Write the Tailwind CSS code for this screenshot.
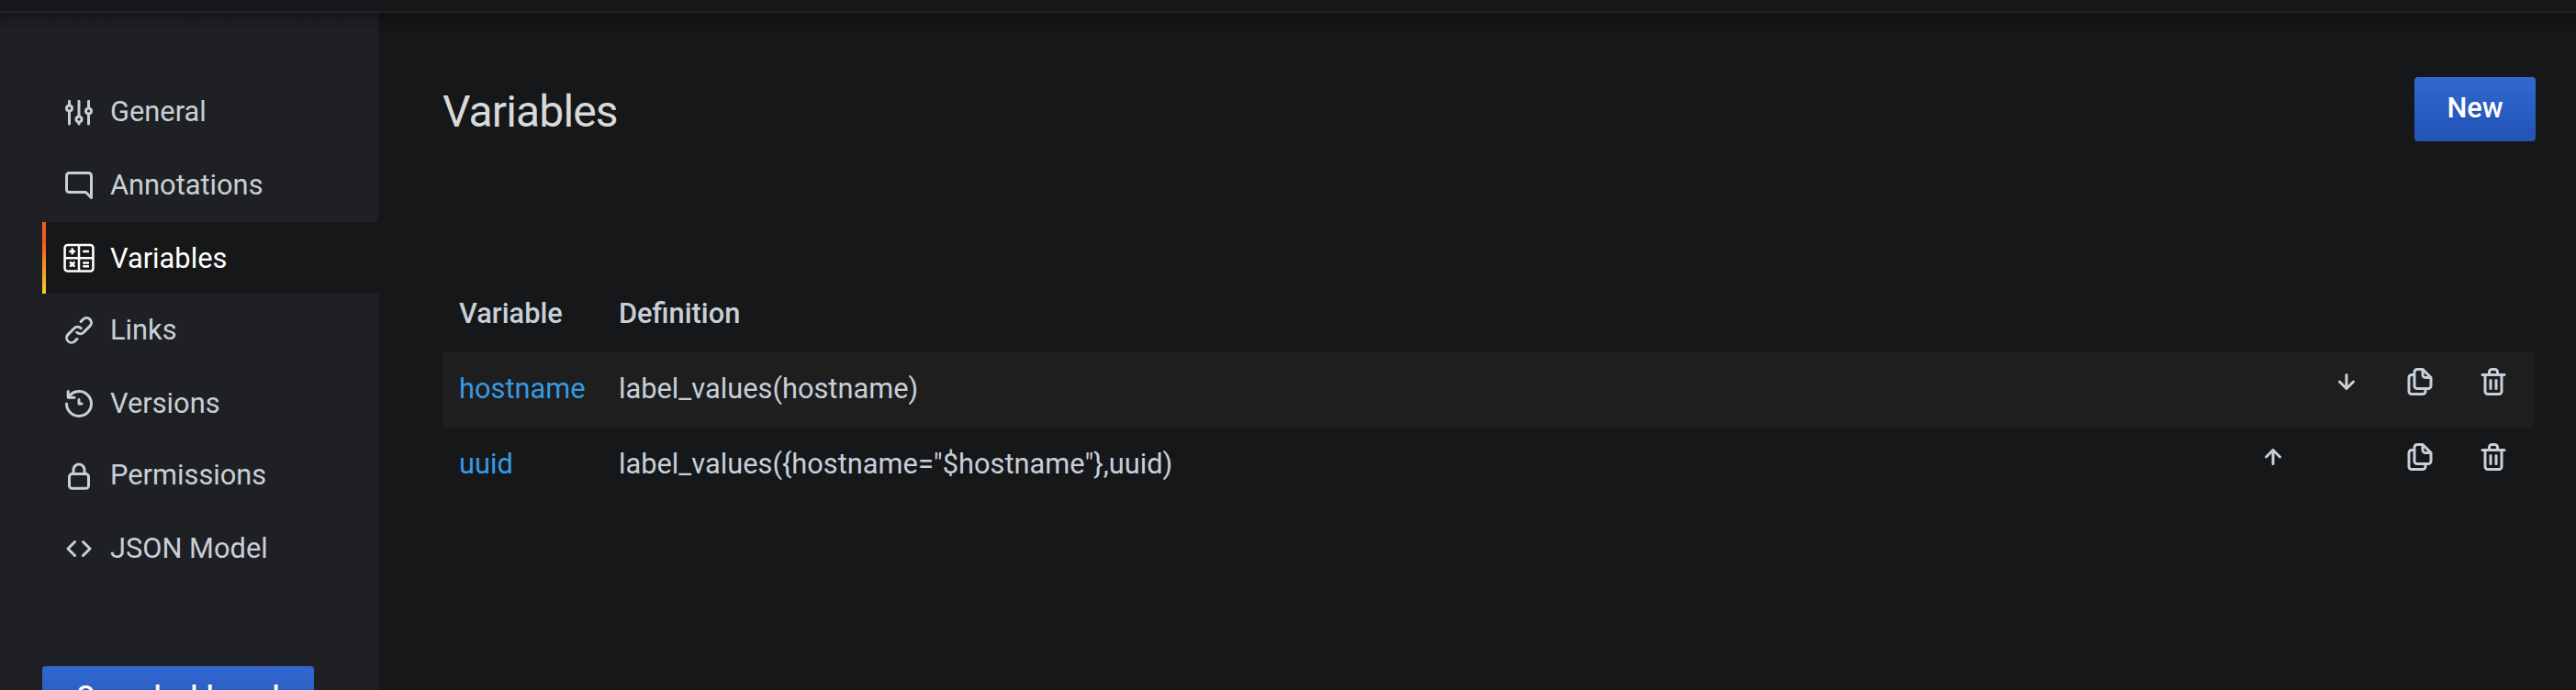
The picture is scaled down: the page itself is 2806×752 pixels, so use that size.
<!DOCTYPE html>
<html lang="en">
<head>
<meta charset="utf-8">
<title>Variables</title>
<script src="https://cdn.jsdelivr.net/npm/@tailwindcss/browser@4"></script>
</head>
<body class="flex h-[752px] w-[2806px] flex-col overflow-hidden bg-[#161719] font-['Roboto',sans-serif] text-[30.8px] leading-[47px] text-[#c7d0d9]">
  <svg class="hidden">
    <symbol id="copy" viewBox="0 0 24 24"><path d="M21,8.94a1.31,1.31,0,0,0-.06-.27l0-.09a1.07,1.07,0,0,0-.19-.28h0l-6-6h0a1.07,1.07,0,0,0-.28-.19.32.32,0,0,0-.09,0A.88.88,0,0,0,14.05,2H10A3,3,0,0,0,7,5V6H6A3,3,0,0,0,3,9V19a3,3,0,0,0,3,3h8a3,3,0,0,0,3-3V18h1a3,3,0,0,0,3-3V9S21,9,21,8.94ZM15,5.41,17.59,8H16a1,1,0,0,1-1-1ZM15,19a1,1,0,0,1-1,1H6a1,1,0,0,1-1-1V9A1,1,0,0,1,6,8H7v7a3,3,0,0,0,3,3h5Zm4-4a1,1,0,0,1-1,1H10a1,1,0,0,1-1-1V5a1,1,0,0,1,1-1h3V7a3,3,0,0,0,3,3h3Z"/></symbol>
    <symbol id="trash" viewBox="0 0 24 24"><path d="M10,18a1,1,0,0,0,1-1V11a1,1,0,0,0-2,0v6A1,1,0,0,0,10,18ZM20,6H16V5a3,3,0,0,0-3-3H11A3,3,0,0,0,8,5V6H4A1,1,0,0,0,4,8H5V19a3,3,0,0,0,3,3h8a3,3,0,0,0,3-3V8h1a1,1,0,0,0,0-2ZM10,5a1,1,0,0,1,1-1h2a1,1,0,0,1,1,1V6H10Zm7,14a1,1,0,0,1-1,1H8a1,1,0,0,1-1-1V8H17Zm-3-1a1,1,0,0,0,1-1V11a1,1,0,0,0-2,0v6A1,1,0,0,0,14,18Z"/></symbol>
    <symbol id="arrow" viewBox="0 0 24 24"><path d="M17.71,11.29a1,1,0,0,0-1.42,0L13,14.59V7a1,1,0,0,0-2,0v7.59l-3.29-3.3a1,1,0,0,0-1.42,1.42l5,5a1,1,0,0,0,.33.21.94.94,0,0,0,.76,0,1,1,0,0,0,.33-.21l5-5A1,1,0,0,0,17.71,11.29Z"/></symbol>
  </svg>

  <header class="h-[14px] shrink-0 border-b-2 border-[#202226]"></header>
  <div class="relative flex min-h-0 flex-1">
    <div class="absolute inset-x-0 top-0 h-5 bg-linear-to-b from-black/25 to-transparent"></div>
    <aside class="w-[412px] shrink-0 bg-[#1f2024] pl-[46px] pt-[69.33px]">
      <nav class="flex flex-col gap-[1.33px]">
        <a class="flex h-[78px] items-center gap-4 pl-[22px]">
          <svg class="size-9" viewBox="0 0 24 24" fill="currentColor"><path transform="translate(0 .35)" d="M20,8.18V3.8a1,1,0,0,0-2,0V8.18a3,3,0,0,0,0,5.64V20.3a1,1,0,0,0,2,0V13.82a3,3,0,0,0,0-5.64ZM19,12a1,1,0,1,1,1-1A1,1,0,0,1,19,12Zm-6,2.18V3.8a1,1,0,0,0-2,0V14.18a3,3,0,0,0,0,5.64V20.3a1,1,0,0,0,2,0V19.82a3,3,0,0,0,0-5.64ZM12,18a1,1,0,1,1,1-1A1,1,0,0,1,12,18ZM6,6.18V3.8A1,1,0,0,0,4,3.8V6.18a3,3,0,0,0,0,5.64V20.3a1,1,0,0,0,2,0V11.82A3,3,0,0,0,6,6.18ZM5,10A1,1,0,1,1,6,9,1,1,0,0,1,5,10Z"/></svg>
          <span class="pb-px">General</span>
        </a>
        <a class="flex h-[78px] items-center gap-4 pl-[22px]">
          <svg class="size-9" viewBox="0 0 24 24" fill="currentColor"><path d="M19,2H5A3,3,0,0,0,2,5V15a3,3,0,0,0,3,3H16.59l3.7,3.71A1,1,0,0,0,21,22a.84.84,0,0,0,.38-.08A1,1,0,0,0,22,21V5A3,3,0,0,0,19,2Zm1,16.59-2.29-2.3A1,1,0,0,0,17,16H5a1,1,0,0,1-1-1V5A1,1,0,0,1,5,4H19a1,1,0,0,1,1,1Z"/></svg>
          <span class="pb-px">Annotations</span>
        </a>
        <a class="flex h-[78px] items-center bg-[#161719] text-white">
          <span class="h-full w-1 bg-linear-to-b from-[#f05a28] from-30% to-[#fbca2a]"></span>
          <svg class="ml-[18px] mr-4 size-9" viewBox="0 0 24 24" fill="none" stroke="currentColor" stroke-width="1.7"><rect x="1.7" y="2.6" width="20.6" height="19" rx="2"/><path d="M12 2.6v19M1.7 12.1h20.6"/><path d="M4.9 7.3h4.5M7.15 5.05v4.5M14.8 7.3h4.5M5.4 14.95l3.5 3.5M8.9 14.95l-3.5 3.5M14.8 15.6h4.5M14.8 18.2h4.5"/></svg>
          <span class="pt-px">Variables</span>
        </a>
        <a class="flex h-[78px] items-center gap-4 pl-[22px]">
          <svg class="size-9" viewBox="0 0 24 24" fill="currentColor"><path d="M10,17.55,8.23,19.27a2.47,2.47,0,0,1-3.5-3.5l4.54-4.55a2.46,2.46,0,0,1,3.39-.09l.12.1a1,1,0,0,0,1.4-1.43A2.75,2.75,0,0,0,14,9.59a4.46,4.46,0,0,0-6.09.22L3.31,14.36a4.48,4.48,0,0,0,6.33,6.33L11.37,19A1,1,0,0,0,10,17.55ZM20.69,3.31a4.49,4.49,0,0,0-6.33,0L12.63,5A1,1,0,0,0,14,6.45l1.73-1.72a2.47,2.47,0,0,1,3.5,3.5l-4.54,4.55a2.46,2.46,0,0,1-3.39.09l-.12-.1a1,1,0,0,0-1.4,1.43,2.75,2.75,0,0,0,.23.21,4.47,4.47,0,0,0,6.09-.22l4.55-4.55A4.49,4.49,0,0,0,20.69,3.31Z"/></svg>
          <span class="pb-px">Links</span>
        </a>
        <a class="flex h-[78px] items-center gap-4 pl-[22px]">
          <svg class="size-9" viewBox="0 0 24 24" fill="currentColor"><path d="M12,2A10,10,0,0,0,5.12,4.77V3a1,1,0,0,0-2,0V7.5a1,1,0,0,0,1,1H8.62a1,1,0,0,0,0-2H6.22A8,8,0,1,1,4,12a1,1,0,0,0-2,0A10,10,0,1,0,12,2Zm0,6a1,1,0,0,0-1,1v3a1,1,0,0,0,1,1h2a1,1,0,0,0,0-2H13V9A1,1,0,0,0,12,8Z"/></svg>
          <span class="pb-px">Versions</span>
        </a>
        <a class="flex h-[78px] items-center gap-4 pl-[22px]">
          <svg class="size-9" viewBox="0 0 24 24" fill="currentColor"><path d="M17,9.4V7.4A5,5,0,0,0,7,7.4V9.4a3,3,0,0,0-3,3v6.4a3,3,0,0,0,3,3H17a3,3,0,0,0,3-3V12.4A3,3,0,0,0,17,9.4ZM9,7.4a3,3,0,0,1,6,0V9.4H9Zm9,11.4a1,1,0,0,1-1,1H7a1,1,0,0,1-1-1V12.4a1,1,0,0,1,1-1H17a1,1,0,0,1,1,1Z"/></svg>
          <span class="pb-[3px]">Permissions</span>
        </a>
        <a class="flex h-[78px] items-center gap-4 pl-[22px]">
          <svg class="size-9" viewBox="0 0 24 24" fill="none" stroke="currentColor" stroke-width="2" stroke-linecap="round" stroke-linejoin="round"><path d="M9 7l-5 5 5 5M15 7l5 5-5 5"/></svg>
          <span class="pb-px">JSON Model</span>
        </a>
      </nav>
      <button class="mt-[88.67px] flex h-[70px] w-[296px] items-start justify-center rounded-[4px] bg-linear-to-b from-[#3168d0] to-[#2253b6] pt-[9px] font-medium text-white [text-shadow:0_2px_2px_rgba(0,0,0,0.1)]">Save dashboard</button>
    </aside>

    <main class="flex-1 pl-[70px] pr-11 pt-[70px]">
      <div class="flex h-[70px] items-start justify-between">
        <h1 class="pt-[2px] text-[48px] leading-[71px] tracking-[-0.018em] text-[#d8d9da]">Variables</h1>
        <button class="flex h-[70px] w-[132px] items-start justify-center rounded-[4px] bg-linear-to-b from-[#3168d0] to-[#2253b6] pt-[10px] font-medium text-white [text-shadow:0_2px_2px_rgba(0,0,0,0.1)]">New</button>
      </div>
      <div class="mt-[148px] w-[2278px]">
        <div class="flex h-[82px] items-start pl-[18px] pt-4 font-medium">
          <div class="w-[174px]">Variable</div>
          <div>Definition</div>
        </div>
        <div class="flex h-[82px] items-start bg-[#1e1e1e] pl-[18px] pr-[26px] pt-[14px]">
          <div class="w-[174px] pt-[2px] text-[#379ae2]">hostname</div>
          <div class="flex-1 pt-[2px]">label_values(hostname)</div>
          <div class="flex gap-11">
            <svg class="size-9 fill-current"><use href="#arrow"/></svg>
            <svg class="size-9 fill-current"><use href="#copy"/></svg>
            <svg class="size-9 fill-current"><use href="#trash"/></svg>
          </div>
        </div>
        <div class="flex h-[82px] items-start pl-[18px] pr-[26px] pt-[14px]">
          <div class="w-[174px] pt-[2px] text-[#379ae2]">uuid</div>
          <div class="flex-1 pt-[2px]">label_values({hostname="$hostname"},uuid)</div>
          <div class="flex">
            <svg class="mr-[124px] size-9 rotate-180 fill-current"><use href="#arrow"/></svg>
            <svg class="mr-11 size-9 fill-current"><use href="#copy"/></svg>
            <svg class="size-9 fill-current"><use href="#trash"/></svg>
          </div>
        </div>
      </div>
    </main>
  </div>
</body>
</html>
